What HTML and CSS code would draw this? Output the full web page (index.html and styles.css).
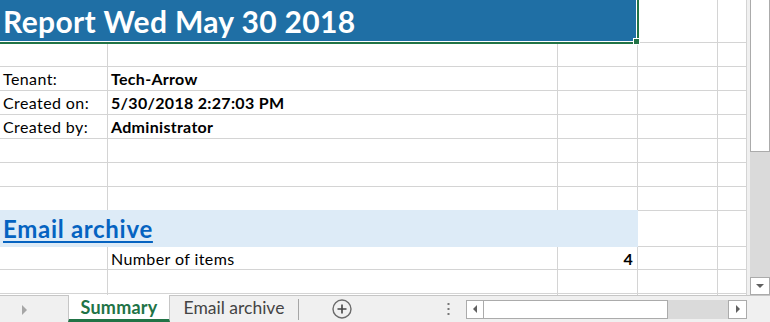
FILE: index.html
```html
<!DOCTYPE html>
<html lang="en">
<head>
  <meta charset="UTF-8">
  <title>Report Wed May 30 2018</title>
  <link rel="stylesheet" href="styles.css">
</head>
<body>
  <div class="workbook">
    <div class="workspace">
      <!-- Sheet grid -->
      <div class="sheet">
        <div class="cell cell-title">Report Wed May 30 2018<span class="fill-handle"></span></div>
        <div class="cell"></div>
        <div class="cell"></div>

        <div class="cell"></div><div class="cell"></div><div class="cell"></div><div class="cell"></div><div class="cell"></div>

        <div class="cell">Tenant:</div>
        <div class="cell strong">Tech-Arrow</div>
        <div class="cell"></div><div class="cell"></div><div class="cell"></div>

        <div class="cell">Created on:</div>
        <div class="cell strong">5/30/2018 2:27:03 PM</div>
        <div class="cell"></div><div class="cell"></div><div class="cell"></div>

        <div class="cell">Created by:</div>
        <div class="cell strong">Administrator</div>
        <div class="cell"></div><div class="cell"></div><div class="cell"></div>

        <div class="cell"></div><div class="cell"></div><div class="cell"></div><div class="cell"></div><div class="cell"></div>
        <div class="cell"></div><div class="cell"></div><div class="cell"></div><div class="cell"></div><div class="cell"></div>
        <div class="cell"></div><div class="cell"></div><div class="cell"></div><div class="cell"></div><div class="cell"></div>

        <div class="cell cell-band"><a class="section-link">Email archive</a></div>
        <div class="cell"></div>
        <div class="cell"></div>

        <div class="cell"></div>
        <div class="cell">Number of items</div>
        <div class="cell strong num">4</div>
        <div class="cell"></div><div class="cell"></div>

        <div class="cell"></div><div class="cell"></div><div class="cell"></div><div class="cell"></div><div class="cell"></div>
        <div class="cell"></div><div class="cell"></div><div class="cell"></div><div class="cell"></div><div class="cell"></div>
      </div>

      <!-- Vertical scrollbar -->
      <div class="vscroll-area">
        <div class="vscroll">
          <div class="vthumb"></div>
          <div class="vtrack"></div>
          <div class="vbtn"><span class="arrow arrow-down"></span></div>
        </div>
      </div>
    </div>

    <!-- Sheet tabs -->
    <div class="tabbar">
      <div class="tab-nav"><span class="nav-arrow"></span></div>
      <div class="tab tab-active">Summary</div>
      <div class="tab">Email archive</div>
      <span class="tab-sep"></span>
      <svg class="add-sheet" width="20" height="20" viewBox="0 0 20 20">
        <circle cx="10" cy="10" r="9" fill="none" stroke="#6b6b6b" stroke-width="1.4"/>
        <path d="M10 5.5v9M5.5 10h9" stroke="#444" stroke-width="1.6"/>
      </svg>
      <svg class="more" width="3" height="13" viewBox="0 0 3 13">
        <rect x="0.5" y="0" width="2" height="2" fill="#777"/>
        <rect x="0.5" y="5" width="2" height="2" fill="#777"/>
        <rect x="0.5" y="10" width="2" height="2" fill="#777"/>
      </svg>
      <div class="hscroll">
        <div class="hbtn"><span class="arrow arrow-left"></span></div>
        <div class="hthumb"></div>
        <div class="htrack"></div>
        <div class="hbtn hbtn-right"><span class="arrow arrow-right"></span></div>
      </div>
    </div>
  </div>
</body>
</html>
```

FILE: styles.css
```css
body {
  margin: 0;
  font-family: Lato, "Liberation Sans", sans-serif;
  background: #fff;
}

.workbook {
  width: 770px;
  height: 322px;
  overflow: hidden;
}

.workspace {
  display: flex;
  height: 295px;
}

/* Grid of cells */
.sheet {
  width: 747px;
  height: 295px;
  overflow: hidden;
  display: grid;
  grid-template-columns: 108px 450px 80px 80px 29px;
  grid-template-rows: 43px repeat(7, 24px) 36px 23px 24px 24px;
}

.cell {
  box-sizing: border-box;
  border-right: 1px solid #d4d4d4;
  border-bottom: 1px solid #d4d4d4;
  display: flex;
  align-items: center;
  padding-left: 3px;
  font-size: 16px;
  letter-spacing: 0.4px;
  color: #000;
  white-space: nowrap;
}

.strong {
  font-weight: bold;
  letter-spacing: 0.3px;
}

.num {
  justify-content: flex-end;
  padding-right: 4px;
}

.cell-title {
  grid-column: span 3;
  position: relative;
  margin-right: -1px;
  margin-bottom: -1px;
  background: #1f6fa5;
  color: #fff;
  font-size: 30px;
  letter-spacing: 0.35px;
  font-weight: bold;
  border-right: 2px solid #217346;
  border-bottom: 2px solid #217346;
  box-shadow: inset -1px -1px 0 #fff;
}

.fill-handle {
  position: absolute;
  right: -3px;
  bottom: -3px;
  width: 5px;
  height: 5px;
  background: #217346;
  border: 1px solid #fff;
  z-index: 1;
}

.cell-band {
  grid-column: span 3;
  margin-top: -1px;
  border: none;
  background: #ddebf7;
}

.section-link {
  color: #0563c1;
  font-size: 24px;
  letter-spacing: 0.7px;
  font-weight: bold;
  text-decoration: underline;
  text-decoration-thickness: 2px;
  text-underline-offset: 3px;
}

/* Vertical scrollbar */
.vscroll-area {
  width: 23px;
  background: #f0f0f0;
  padding-left: 3px;
  box-sizing: border-box;
}

.vscroll {
  width: 20px;
  height: 100%;
  display: flex;
  flex-direction: column;
}

.vthumb {
  height: 152px;
  box-sizing: border-box;
  background: #fff;
  border: 1px solid #ababab;
  border-top: none;
}

.vtrack {
  flex: 1;
  background: #dadada;
}

.vbtn {
  height: 18px;
  box-sizing: border-box;
  background: #fff;
  border: 1px solid #ababab;
  display: flex;
  align-items: center;
  justify-content: center;
}

.arrow {
  width: 0;
  height: 0;
  border-style: solid;
  border-color: transparent;
}

.arrow-down {
  border-width: 4px 4px 0 4px;
  border-top-color: #606060;
}

.arrow-left {
  border-width: 4px 4px 4px 0;
  border-right-color: #606060;
}

.arrow-right {
  border-width: 4px 0 4px 4px;
  border-left-color: #606060;
}

/* Sheet tabs */
.tabbar {
  height: 27px;
  box-sizing: border-box;
  border-top: 1px solid #c6c6c6;
  background: #f0f0f0;
  display: flex;
  align-items: center;
}

.tab-nav {
  width: 68px;
  padding-left: 22px;
  box-sizing: border-box;
}

.nav-arrow {
  display: block;
  width: 0;
  height: 0;
  border-style: solid;
  border-color: transparent;
  border-width: 5px 0 5px 5px;
  border-left-color: #a6a6a6;
  margin-top: 2px;
}

.tab {
  width: 128px;
  align-self: stretch;
  box-sizing: border-box;
  display: flex;
  align-items: center;
  justify-content: center;
  padding-bottom: 3px;
  font-size: 17.5px;
  color: #444;
}

.tab-active {
  width: 102px;
  margin-top: -1px;
  padding-bottom: 0;
  background: #fff;
  border-left: 1px solid #c6c6c6;
  border-right: 1px solid #c6c6c6;
  border-bottom: 3px solid #217346;
  color: #217346;
  font-size: 18px;
  letter-spacing: 0.2px;
  font-weight: bold;
}

.tab-sep {
  width: 1px;
  height: 21px;
  background: #a6a6a6;
}

.add-sheet {
  margin-left: 33px;
}

.more {
  margin-left: 95px;
}

/* Horizontal scrollbar */
.hscroll {
  margin-left: 16px;
  width: 281px;
  height: 19px;
  display: flex;
}

.hbtn {
  width: 18px;
  box-sizing: border-box;
  background: #fff;
  border: 1px solid #ababab;
  display: flex;
  align-items: center;
  justify-content: center;
}

.hbtn-right {
  width: 19px;
}

.hthumb {
  width: 184px;
  box-sizing: border-box;
  background: #fff;
  border: 1px solid #ababab;
  border-left: none;
}

.htrack {
  width: 60px;
  background: #dadada;
}
```
